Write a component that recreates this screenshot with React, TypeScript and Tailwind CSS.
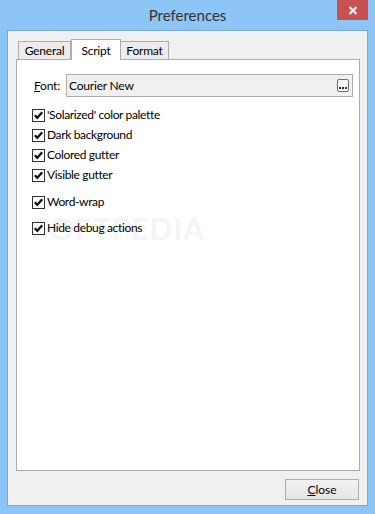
const font = "font-['Lato','Noto_Sans',sans-serif]";

function Check({ label }: { label: string }) {
  return (
    <div className="relative z-10 flex h-[20px] items-center">
      <div className="flex h-[13px] w-[13px] items-center justify-center border border-[#333333] bg-white">
        <svg width="11" height="11" viewBox="0 0 11 11">
          <path d="M1.8 5.2 L4.3 7.8 L9.2 2.3" fill="none" stroke="#111" strokeWidth="2.2" />
        </svg>
      </div>
      <span className="ml-[2px] text-[12px] leading-none tracking-[-0.35px] text-black">{label}</span>
    </div>
  );
}

export default function App() {
  return (
    <div className={`relative flex h-[514px] w-[375px] flex-col bg-[#8cc5f6] ${font}`}>
      {/* title bar */}
      <div className="relative flex h-[30px] items-center justify-center">
        <span className="text-[15px] text-[#333333]">Preferences</span>
        <div className="absolute right-[7px] top-0 flex h-[20px] w-[31px] items-center justify-center bg-[#c75050]">
          <svg width="10" height="9" viewBox="0 0 10 9">
            <path d="M1.5 1 L8.5 8 M8.5 1 L1.5 8" stroke="white" strokeWidth="2" />
          </svg>
        </div>
      </div>

      {/* client */}
      <div className="mx-[7px] flex h-[476px] flex-col border border-[#76a9d6] bg-[#f0f0f0]">
        <div className="ml-[8px] mt-[8px] w-[344px]">
          <div className="flex h-[20px] items-end pl-[2px] text-[12px] tracking-[-0.2px] text-black">
            <div className="flex h-[18px] w-[53px] items-center justify-center border border-b-0 border-[#acacac] bg-[#ececec]">
              General
            </div>
            <div className="relative z-10 mb-[-1px] flex h-[21px] w-[50px] items-start justify-center border border-b-0 border-[#acacac] bg-white pt-[2px]">
              Script
            </div>
            <div className="flex h-[18px] w-[48px] items-center justify-center border border-b-0 border-l-0 border-[#acacac] bg-[#ececec]">
              Format
            </div>
          </div>

          <div className="relative h-[412px] border border-[#adadad] bg-white pl-[15px] pt-[14px]">
            <div className="pointer-events-none absolute left-[15px] top-[146px] z-0 text-[30px] font-bold tracking-[1px] text-[#f5f5f5]">
              SOFTPEDIA
            </div>

            <div className="relative z-10 flex items-center">
              <span className="ml-[2px] w-[32px] text-[12px] tracking-[-0.2px] text-black">
                <span className="underline">F</span>ont:
              </span>
              <div className="flex h-[23px] w-[287px] items-center justify-between border border-[#acacac] bg-[#f0f0f0] pl-[2px] pr-[3px]">
                <span className="text-[12px] tracking-[-0.2px] text-black">Courier New</span>
                <div className="flex h-[13px] w-[12px] items-end justify-center rounded-[2px] border border-[#707070] bg-[#f7f7f7] pb-[2px]">
                  <svg width="8" height="2" viewBox="0 0 8 2">
                    <rect x="0" y="0" width="2" height="2" fill="#333" />
                    <rect x="3" y="0" width="2" height="2" fill="#333" />
                    <rect x="6" y="0" width="2" height="2" fill="#333" />
                  </svg>
                </div>
              </div>
            </div>

            <div className="mt-[8px] flex flex-col">
              <Check label="'Solarized' color palette" />
              <Check label="Dark background" />
              <Check label="Colored gutter" />
              <Check label="Visible gutter" />
              <div className="mt-[7px]">
                <Check label="Word-wrap" />
              </div>
              <div className="mt-[6px]">
                <Check label="Hide debug actions" />
              </div>
            </div>
          </div>
        </div>

        <div className="mt-[8px] flex justify-end pr-[8px]">
          <button className="flex h-[21px] w-[74px] items-center justify-center border border-[#adadad] bg-gradient-to-b from-[#f2f2f2] to-[#e5e5e5] text-[12px] text-black">
            <span>
              <span className="underline">C</span>lose
            </span>
          </button>
        </div>
      </div>
    </div>
  );
}
